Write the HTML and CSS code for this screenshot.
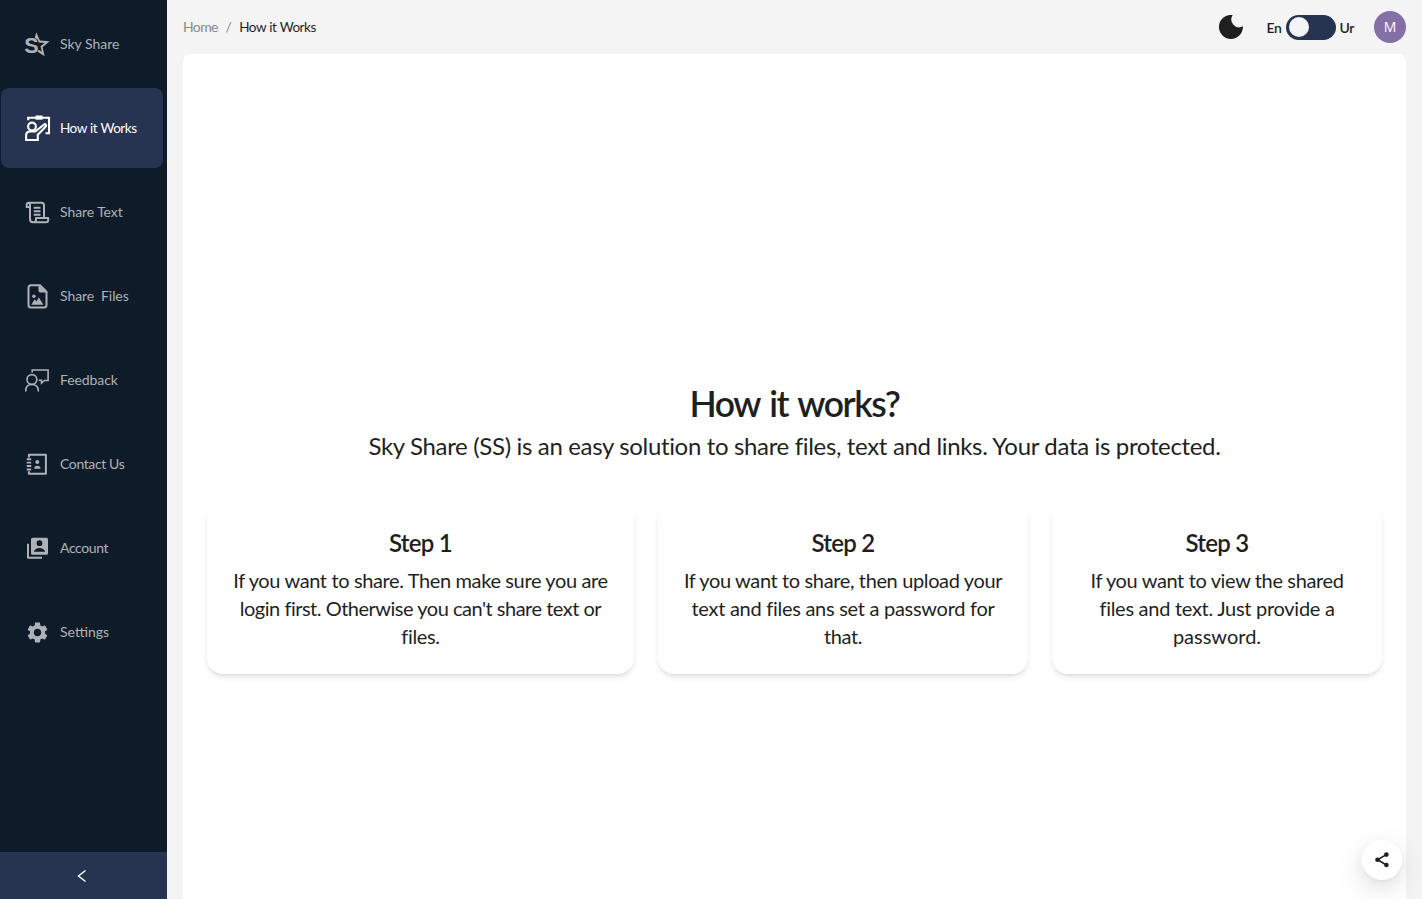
FILE: index.html
```html
<!DOCTYPE html>
<html lang="en">
<head>
<meta charset="utf-8">
<title>Sky Share</title>
<link rel="stylesheet" href="styles.css">
</head>
<body>
<aside class="sidebar">
  <nav class="nav">
    <a class="nav-item brand">
      <svg class="icon" viewBox="0 0 26 26"><text class="brand-letter" x="-0.8" y="21.800">S</text><path d="M11.300 1.200 14.900 9.400 24.600 10.300 17.600 16.200 19.600 25.200 12.400 20.600 13.700 18.700 16.800 20.700 15.500 15.300 19.600 11.900 13.700 11.400 12 7.500 11.500 8.200 9.800 6.500Z"/></svg>
      <span class="label">Sky Share</span>
    </a>
    <a class="nav-item active">
      <svg class="icon" viewBox="0 -.5 26 26"><g class="line thick"><path d="M3.200 4.800V2.300H24v15.500h-3.500"/><circle cx="7" cy="11" r="3.900"/><path d="M1.100 24.500V20q0-4 4-4h5.200L19.800 8.500q2.300 1.300.3 3.300L12.800 19.200V24.500Z"/></g><path d="M10.500 0h7v4.200h-7z"/></svg>
      <span class="label l-how">How it Works</span>
    </a>
    <a class="nav-item">
      <svg class="icon" viewBox="0.500 -.5 26 26"><g class="line"><path d="M5.500 7.500H2.200V5.300Q2.200 3.200 4.200 3.200H17Q19.500 3.200 19.500 5.700V18.500M5.500 4V19.800Q5.500 22.800 8.500 22.800H21.500Q23.700 22.800 23.700 20.800V18.500H11.500V20.500Q11.300 22.800 8.500 22.800M4.200 3.200Q5.500 3.500 5.500 5.500V7.500M9.200 8.200h6.800M9.200 11.700h6.800M9.200 15.200h6.800"/></g></svg>
      <span class="label l-text">Share Text</span>
    </a>
    <a class="nav-item">
      <svg class="icon" viewBox="0.500 -.5 26 26"><path class="line" d="M6.500 1.800H15.500L22 8.300V21.500Q22 24 19.500 24H6.500Q4 24 4 21.500V4.300Q4 1.800 6.500 1.800Z"/><path d="M14 1.800V7.200Q14 9 16 9H22.200ZM6.800 21.300 10.200 15.800 12.200 18 14.200 13.800 18.900 21.300Z"/><circle cx="9.400" cy="12.700" r="1.700"/></svg>
      <span class="label l-text">Share&nbsp; Files</span>
    </a>
    <a class="nav-item">
      <svg class="icon" viewBox="0.300 -.5 26 26"><g class="line thin"><circle cx="7.200" cy="12" r="4.900"/><path d="M1.100 24V23Q1.100 17 7.200 17T13.600 23V24M7.500 5V2.500H23.400V13H19.800L16.800 15.500V12.800H14"/></g></svg>
      <span class="label l-text">Feedback</span>
    </a>
    <a class="nav-item">
      <svg class="icon" viewBox="0.300 -.4 26 26"><path class="line" d="M4.200 6V3.400H21.200V22.400H4.200V19.800"/><path d="M2 6.900h4.500v1.900H2zM2 10.300h4.500v1.900H2zM2 13.700h4.500v1.900H2zM2 17.100h4.500V19H2zM9.500 17.300V16.500Q10 14.300 12.600 14.300T15.800 16.500V17.300Z"/><circle cx="12.600" cy="10.500" r="2"/></svg>
      <span class="label l-tight">Contact Us</span>
    </a>
    <a class="nav-item">
      <svg class="icon" viewBox="0 -.8 26 26"><path fill-rule="evenodd" d="M7.600 2H21.400Q23 2 23 3.600V17.400Q23 19 21.400 19H7.600Q6 19 6 17.400V3.600Q6 2 7.600 2ZM14.500 4.500A2.900 2.900 0 1 0 14.500 10.300 2.900 2.900 0 1 0 14.500 4.500ZM9 16H20V15.300Q18 12.200 14.500 12.200T9 15.300Z"/><path class="line" d="M3 8V22H17"/></svg>
      <span class="label l-tight">Account</span>
    </a>
    <a class="nav-item">
      <svg class="icon gear" viewBox="0 0 24 24"><path d="M19.140 12.940c.04-.3.060-.61.060-.94 0-.32-.02-.64-.07-.94l2.030-1.580c.18-.14.23-.41.120-.61l-1.920-3.320c-.12-.22-.37-.29-.59-.22l-2.390.96c-.5-.38-1.030-.7-1.620-.94l-.36-2.540c-.04-.24-.24-.41-.48-.41h-3.840c-.24 0-.43.17-.47.41l-.36 2.540c-.59.24-1.130.57-1.620.94l-2.390-.96c-.22-.08-.47 0-.59.22L2.740 8.870c-.12.21-.08.47.12.61l2.030 1.580c-.05.3-.09.63-.09.94s.02.64.070.94l-2.030 1.580c-.18.14-.23.41-.12.610l1.920 3.320c.12.22.37.29.59.22l2.390-.96c.5.38 1.030.7 1.620.94l.36 2.540c.05.24.24.41.48.41h3.840c.24 0 .44-.17.47-.41l.36-2.540c.59-.24 1.130-.56 1.620-.94l2.390.96c.22.08.47 0 .59-.22l1.920-3.320c.12-.22.07-.47-.12-.61l-2.010-1.580zM12 15.600c-1.980 0-3.600-1.620-3.600-3.600s1.620-3.600 3.600-3.600 3.600 1.620 3.600 3.600-1.620 3.600-3.600 3.600z"/></svg>
      <span class="label">Settings</span>
    </a>
  </nav>
  <button class="collapse" aria-label="Collapse"><svg width="10" height="14" viewBox="0 0 10 14"><path d="M8.500 1.500 1.500 7 8.500 12.500"/></svg></button>
</aside>
<div class="page">
  <header class="topbar">
    <div class="crumbs"><span class="home">Home</span><span class="sep">/</span><span class="here">How it Works</span></div>
    <div class="tools">
      <svg class="moon" viewBox="0 0 24 24"><path d="M13.700.1A12 12 0 1 0 23.900 11.300 7.800 7.800 0 0 1 13.700.1Z"/></svg>
      <div class="lang"><span>En</span><span class="switch"><span class="knob"></span></span><span>Ur</span></div>
      <div class="avatar">M</div>
    </div>
  </header>
  <main class="panel">
    <h1 class="title">How it works?</h1>
    <p class="lead">Sky Share (SS) is an easy solution to share files, text and links. Your data is protected.</p>
    <section class="steps">
      <article class="card"><h2>Step 1</h2><p>If you want to share. Then make sure you are<br><span class="snug">login first. Otherwise you can't share text or</span><br>files.</p></article>
      <article class="card"><h2>Step 2</h2><p>If you want to share, then upload your<br><span class="loose">text and files ans set a password for</span><br>that.</p></article>
      <article class="card"><h2>Step 3</h2><p>If you want to view the shared<br><span class="loose">files and text. Just provide a</span><br><span class="wide">password.</span></p></article>
    </section>
  </main>
</div>
<button class="share" aria-label="Share"><svg width="16" height="16" viewBox="0 0 16 16"><path d="M12.300 2.600 3.700 7.800 12.300 13"/><circle cx="12.400" cy="2.600" r="2.300"/><circle cx="3.500" cy="7.800" r="2.300"/><circle cx="12.400" cy="13" r="2.300"/></svg></button>
</body>
</html>
```
FILE: styles.css
```css
* { box-sizing: border-box; }
body {
  margin: 0;
  height: 100vh;
  display: flex;
  overflow: hidden;
  background: #f4f4f4;
  color: #1f1f1f;
  font-family: Lato, "Open Sans", sans-serif;
  font-size: 14px;
}
h1, h2, p { margin: 0; }
button { border: 0; padding: 0; }

.sidebar {
  width: 167px;
  flex: none;
  display: flex;
  flex-direction: column;
  background: #0e1b29;
}
.nav {
  flex: 1;
  display: flex;
  flex-direction: column;
  gap: 4px;
  padding: 4px 4px 0 1px;
}
.nav-item {
  height: 80px;
  display: flex;
  align-items: center;
  gap: 9px;
  padding-left: 24px;
  border-radius: 8px;
  color: #aeb2b8;
  white-space: nowrap;
}
.nav-item.active { background: #263451; color: #fff; }
.label { padding-bottom: 2px; }
.l-how { padding-bottom: 0; font-size: 13.5px; letter-spacing: -.5px; word-spacing: .6px; }
.l-text { letter-spacing: -.08px; }
.l-tight { letter-spacing: -.38px; }
.icon { width: 26px; height: 26px; flex: none; fill: currentColor; }
.icon.gear { width: 25px; height: 25px; margin-right: 1px; }
.brand-letter { font: bold 21.5px "Liberation Sans", sans-serif; }
.line { fill: none; stroke: currentColor; stroke-width: 2; stroke-linejoin: round; }
.thick { stroke-width: 2.1; stroke-linejoin: miter; }
.thin { stroke-width: 1.6; stroke-linejoin: miter; }
.collapse {
  height: 47px;
  display: flex;
  align-items: center;
  justify-content: center;
  padding-right: 3px;
  background: #263451;
}
.collapse svg { fill: none; stroke: #fff; stroke-width: 1.4; }

.page {
  flex: 1;
  display: flex;
  flex-direction: column;
  padding: 0 16px;
}
.topbar {
  height: 54px;
  flex: none;
  display: flex;
  align-items: center;
  justify-content: space-between;
}
.crumbs { display: flex; align-items: baseline; gap: 7.5px; padding-bottom: 2px; color: #8b8b8b; }
.home { letter-spacing: -.6px; }
.here { color: #1f1f1f; font-size: 13.5px; letter-spacing: -.5px; word-spacing: .6px; }
.tools { display: flex; align-items: center; }
.moon { width: 24px; height: 24px; margin-right: 24px; fill: #1f1f1f; }
.lang { display: flex; align-items: center; gap: 4px; margin-right: 20px; font-weight: 600; letter-spacing: -.4px; }
.switch {
  width: 50px;
  height: 25px;
  margin: 0 -.6px 0 .6px;
  padding: 2px 3px;
  border-radius: 13px;
  background: #263451;
}
.knob { display: block; width: 20px; height: 20px; border-radius: 50%; background: #f4f4f4; }
.avatar {
  width: 32px;
  height: 32px;
  display: grid;
  place-items: center;
  padding-bottom: 1px;
  border-radius: 50%;
  background: #8470a5;
  color: #fff;
  font-family: "Open Sans", sans-serif;
}

.panel {
  flex: 1;
  padding: 328px 24px 0;
  border-radius: 8px 8px 0 0;
  background: #fff;
  text-align: center;
  white-space: nowrap;
}
.title { padding-top: 2px; font-size: 35.5px; line-height: 40px; font-weight: 600; letter-spacing: -1.45px; word-spacing: 2.5px; margin-bottom: 6px; }
.lead { font-size: 24px; line-height: 32px; letter-spacing: -.34px; margin-bottom: 40px; }
.steps { display: grid; grid-template-columns: 427px 370px 330px; gap: 24px; }
.card {
  padding: 25px 24px 24px;
  border-radius: 16px;
  box-shadow: 0 4px 6px -1px rgba(0, 0, 0, .1), 0 2px 4px -2px rgba(0, 0, 0, .1);
}
.card h2 { font-size: 24px; line-height: 32px; font-weight: 600; letter-spacing: -.75px; margin-bottom: 7px; }
.card p { font-size: 20px; line-height: 28px; letter-spacing: -.37px; }
.card .snug { letter-spacing: -.49px; }
.card .loose { letter-spacing: -.28px; }
.card .wide { letter-spacing: 0; }

.share {
  position: fixed;
  right: 20px;
  bottom: 19px;
  width: 40px;
  height: 40px;
  display: grid;
  place-items: center;
  border-radius: 50%;
  background: #fff;
  box-shadow: 0 6px 16px rgba(0, 0, 0, .08), 0 3px 6px -4px rgba(0, 0, 0, .12), 0 9px 28px 8px rgba(0, 0, 0, .05);
}
.share svg { fill: #1f1f1f; }
.share path { fill: none; stroke: #1f1f1f; stroke-width: 1.6; }
```
